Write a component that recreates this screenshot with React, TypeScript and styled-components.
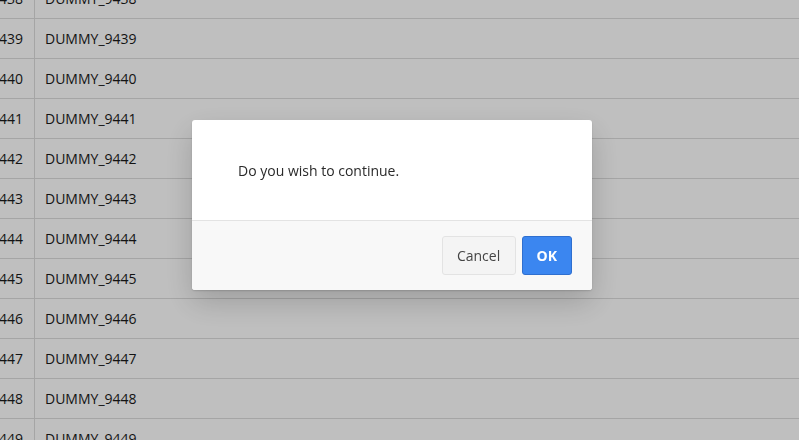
import React from "react";
import styled, { createGlobalStyle } from "styled-components";

const Global = createGlobalStyle`
  html, body { margin: 0; padding: 0; background: #fff; overflow: hidden; }
  body { font-family: "Open Sans", "Noto Sans", sans-serif; font-size: 14px; color: #222; }
`;

const Page = styled.div`
  height: 440px;
  overflow: hidden;
`;

const Table = styled.div`
  margin-top: -21px;
  margin-left: -19px;
  display: flex;
  flex-direction: column;
`;

const Row = styled.div`
  display: flex;
  height: 39px;
  border-bottom: 1px solid #dcdcdc;
`;

const Cell = styled.div<{ $w?: number }>`
  display: flex;
  align-items: center;
  padding: 0 10px;
  box-sizing: border-box;
  color: #1a1a1a;
  ${(p) => (p.$w ? `width: ${p.$w}px; flex: none; border-right: 1px solid #dcdcdc;` : "flex: 1;")}
`;

const Overlay = styled.div`
  position: fixed;
  inset: 0;
  background: rgba(0, 0, 0, 0.25);
  display: flex;
  justify-content: center;
  align-items: flex-start;
  padding: 120px 15px 0 0;
  box-sizing: border-box;
`;

const Dialog = styled.div`
  width: 400px;
  background: #fff;
  border-radius: 3px;
  box-shadow: 0 12px 30px rgba(0, 0, 0, 0.18), 0 1px 2px rgba(0, 0, 0, 0.15);
  overflow: hidden;
`;

const Body = styled.div`
  padding: 41px 46px 39px;
  line-height: 20px;
  color: #2a2a2a;
`;

const Footer = styled.div`
  border-top: 1px solid #e3e3e3;
  background: #f8f8f8;
  display: flex;
  justify-content: flex-end;
  gap: 6px;
  padding: 15px 20px 15px;
`;

const Button = styled.button<{ $primary?: boolean }>`
  height: 39px;
  box-sizing: border-box;
  border-radius: 3px;
  font-family: "Open Sans", "Noto Sans", sans-serif;
  font-size: 14px;
  cursor: pointer;
  padding: 0 14px;
  border: 1px solid ${(p) => (p.$primary ? "#2f6fcf" : "#e3e3e3")};
  background: ${(p) => (p.$primary ? "#3b86f0" : "#f4f4f4")};
  color: ${(p) => (p.$primary ? "#fff" : "#444")};
  font-weight: ${(p) => (p.$primary ? 700 : 400)};
  min-width: ${(p) => (p.$primary ? 50 : 74)}px;
`;

const rows = Array.from({ length: 12 }, (_, i) => 9438 + i);

export default function App() {
  return (
    <Page>
      <Global />
      <Table>
        {rows.map((n) => (
          <Row key={n}>
            <Cell $w={54}>{n}</Cell>
            <Cell>DUMMY_{n}</Cell>
          </Row>
        ))}
      </Table>
      <Overlay>
        <Dialog>
          <Body>Do you wish to continue.</Body>
          <Footer>
            <Button>Cancel</Button>
            <Button $primary>OK</Button>
          </Footer>
        </Dialog>
      </Overlay>
    </Page>
  );
}
